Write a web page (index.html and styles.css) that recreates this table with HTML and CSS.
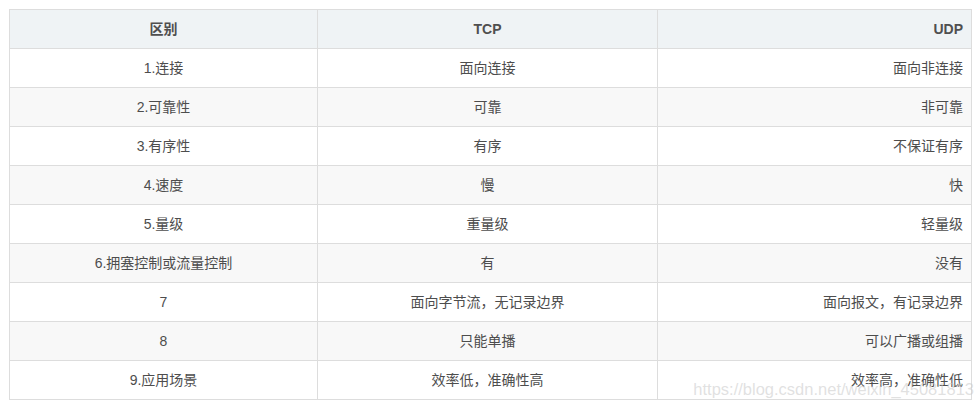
FILE: index.html
```html
<!DOCTYPE html>
<html lang="zh-CN">
<head>
<meta charset="utf-8">
<link rel="stylesheet" href="styles.css">
</head>
<body>
<div class="wrap">
<table class="cmp">
<thead>
<tr><th class="c1">区别</th><th class="c2">TCP</th><th class="c3">UDP</th></tr>
</thead>
<tbody>
<tr><td class="c1">1.连接</td><td class="c2">面向连接</td><td class="c3">面向非连接</td></tr>
<tr><td class="c1">2.可靠性</td><td class="c2">可靠</td><td class="c3">非可靠</td></tr>
<tr><td class="c1">3.有序性</td><td class="c2">有序</td><td class="c3">不保证有序</td></tr>
<tr><td class="c1">4.速度</td><td class="c2">慢</td><td class="c3">快</td></tr>
<tr><td class="c1">5.量级</td><td class="c2">重量级</td><td class="c3">轻量级</td></tr>
<tr><td class="c1">6.拥塞控制或流量控制</td><td class="c2">有</td><td class="c3">没有</td></tr>
<tr><td class="c1">7</td><td class="c2">面向字节流，无记录边界</td><td class="c3">面向报文，有记录边界</td></tr>
<tr><td class="c1">8</td><td class="c2">只能单播</td><td class="c3">可以广播或组播</td></tr>
<tr><td class="c1">9.应用场景</td><td class="c2">效率低，准确性高</td><td class="c3">效率高，准确性低</td></tr>
</tbody>
</table>
<div class="watermark">https://blog.csdn.net/weixin_45081813</div>
</div>
</body>
</html>
```

FILE: styles.css
```css
html, body {
  margin: 0;
  padding: 0;
  background: #fff;
}
body {
  padding: 9px 0 0 9px;
}
.wrap {
  position: relative;
  width: 963px;
}
.cmp {
  border-collapse: collapse;
  width: 963px;
  table-layout: fixed;
  font-family: "Liberation Sans", "Noto Sans CJK SC", sans-serif;
  font-size: 14px;
  color: #4d4d4d;
}
.cmp th, .cmp td {
  border: 1px solid #dddddd;
  padding: 8px;
  line-height: 22px;
  height: 22px;
}
.cmp th {
  background: #eff3f5;
  font-weight: bold;
  color: #4f4f4f;
}
.cmp tbody tr:nth-child(even) td {
  background: #f8f8f8;
}
.cmp .c1 { width: 291px; text-align: center; }
.cmp .c2 { width: 323px; text-align: center; }
.cmp .c3 { text-align: right; }
.watermark {
  position: absolute;
  right: -2px;
  bottom: 1px;
  font-family: "Liberation Sans", sans-serif;
  font-size: 16.5px;
  color: rgba(200, 200, 200, 0.55);
  white-space: nowrap;
  pointer-events: none;
}
```
